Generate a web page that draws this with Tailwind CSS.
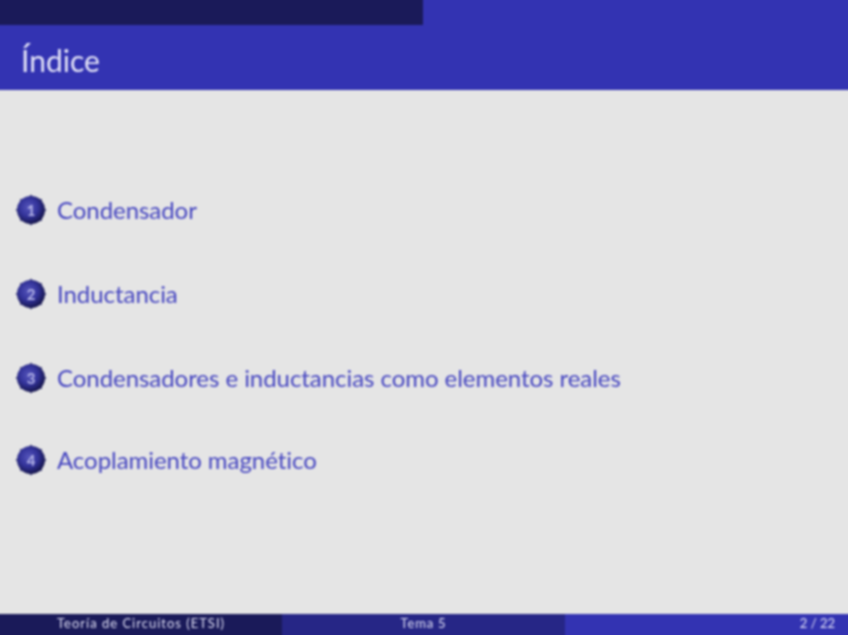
<!DOCTYPE html>
<html lang="es">
<head>
  <meta charset="UTF-8" />
  <meta name="viewport" content="width=device-width, initial-scale=1.0"/>
  <title>Índice</title>
  <script src="https://cdn.jsdelivr.net/npm/@tailwindcss/browser@4"></script>
</head>
<body class="w-[848px] h-[635px] overflow-hidden bg-[#e5e5e5] font-['Lato',sans-serif] [font-variant-ligatures:none]">
<svg class="absolute w-0 h-0">
  <defs>
    <radialGradient id="ball" cx="42%" cy="40%" r="60%">
      <stop offset="0%" stop-color="#5656bc"/>
      <stop offset="55%" stop-color="#33339a"/>
      <stop offset="100%" stop-color="#16164e"/>
    </radialGradient>
    <symbol id="bullet" viewBox="0 0 32 32">
      <path d="M16 0.5l1.6 2h-3.2zM16 31.5l-1.6-2h3.2zM0.5 16l2-1.6v3.2zM31.5 16l-2 1.6v-3.2zM5 5l2.6 0.6-2 2zM27 27l-2.6-0.6 2-2zM27 5l-0.6 2.6-2-2zM5 27l0.6-2.6 2 2z" fill="#1f1f66"/>
      <circle cx="16" cy="16" r="14" fill="url(#ball)"/>
    </symbol>
  </defs>
</svg>

<!-- wrapper runs 6px past the window so the blur doesn't fade at the edges -->
<div class="-ml-[6px] -mt-[6px] w-[860px] h-[647px] flex flex-col bg-[#e5e5e5] [filter:blur(0.9px)]">
  <header class="h-[96px] bg-[#3333b2] shrink-0">
    <div class="w-[429px] h-[31px] bg-[#1a1a59]"></div>
    <h1 class="pl-[27px] pt-[15px] text-[30px] leading-[40px] text-[#e6e6f8]">Índice</h1>
  </header>

  <main class="flex-1 flex flex-col pt-[105px] pl-[21px] gap-[54px] text-[24px] tracking-[-0.05px] text-[#4444c0]">
    <div class="flex items-center gap-[10px] h-[30px]">
      <span class="relative w-[32px] h-[32px] flex items-center justify-center text-[15px] font-bold text-[#b4b4e6]">
        <svg class="absolute inset-0 w-[32px] h-[32px]"><use href="#bullet"/></svg>
        <span class="relative">1</span>
      </span>
      <span>Condensador</span>
    </div>
    <div class="flex items-center gap-[10px] h-[30px]">
      <span class="relative w-[32px] h-[32px] flex items-center justify-center text-[15px] font-bold text-[#b4b4e6]">
        <svg class="absolute inset-0 w-[32px] h-[32px]"><use href="#bullet"/></svg>
        <span class="relative">2</span>
      </span>
      <span>Inductancia</span>
    </div>
    <div class="flex items-center gap-[10px] h-[30px]">
      <span class="relative w-[32px] h-[32px] flex items-center justify-center text-[15px] font-bold text-[#b4b4e6]">
        <svg class="absolute inset-0 w-[32px] h-[32px]"><use href="#bullet"/></svg>
        <span class="relative">3</span>
      </span>
      <span>Condensadores e inductancias como elementos reales</span>
    </div>
    <div class="flex items-center gap-[10px] h-[30px] -mt-[2px]">
      <span class="relative w-[32px] h-[32px] flex items-center justify-center text-[15px] font-bold text-[#b4b4e6]">
        <svg class="absolute inset-0 w-[32px] h-[32px]"><use href="#bullet"/></svg>
        <span class="relative">4</span>
      </span>
      <span>Acoplamiento magnético</span>
    </div>
  </main>

  <footer class="h-[27px] shrink-0 grid grid-cols-[288px_283px_289px] text-[13px] leading-[19px] text-[#e0e0f6]">
    <div class="bg-[#1a1a59] pl-[6px] text-center tracking-[1px]">Teoría de Circuitos (ETSI)</div>
    <div class="bg-[#262686] text-center tracking-[0.8px]">Tema 5</div>
    <div class="bg-[#3333b2] text-right pr-[19px]">2 / 22</div>
  </footer>
</div>

</body>
</html>
